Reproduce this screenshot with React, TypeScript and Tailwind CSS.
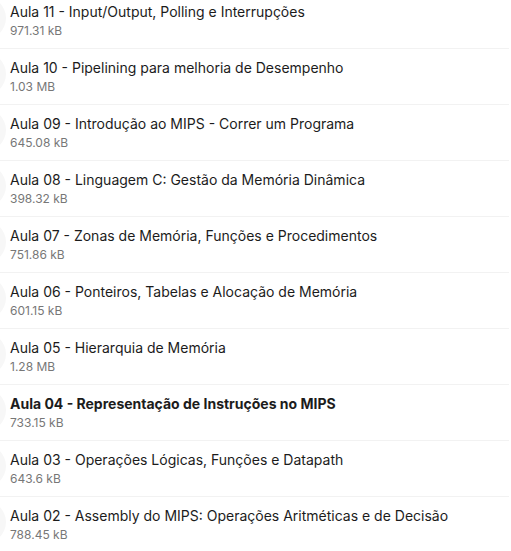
import React from "react";

const aulas = [
  { t: "Aula 11 - Input/Output, Polling e Interrupções", s: "971.31 kB" },
  { t: "Aula 10 - Pipelining para melhoria de Desempenho", s: "1.03 MB" },
  { t: "Aula 09 - Introdução ao MIPS - Correr um Programa", s: "645.08 kB" },
  { t: "Aula 08 - Linguagem C: Gestão da Memória Dinâmica", s: "398.32 kB" },
  { t: "Aula 07 - Zonas de Memória, Funções e Procedimentos", s: "751.86 kB" },
  { t: "Aula 06 - Ponteiros, Tabelas e Alocação de Memória", s: "601.15 kB" },
  { t: "Aula 05 - Hierarquia de Memória", s: "1.28 MB" },
  { t: "Aula 04 - Representação de Instruções no MIPS", s: "733.15 kB", bold: true },
  { t: "Aula 03 - Operações Lógicas, Funções e Datapath", s: "643.6 kB" },
  { t: "Aula 02 - Assembly do MIPS: Operações Aritméticas e de Decisão", s: "788.45 kB" },
];

function Row({ t, s, bold }: { t: string; s: string; bold?: boolean }) {
  return (
    <div className="relative h-[56px] border-b border-[#f2f2f2] pl-[10px] pt-[9px] overflow-hidden">
      <div className="absolute left-[-36px] top-[4px] w-[42px] h-[42px] rounded-full bg-[#f7f7f7]" />
      <div className={"relative text-[14px] leading-[20px] text-[#1c1c1c] " + (bold ? "font-bold" : "font-normal")}>{t}</div>
      <div className="relative text-[12px] leading-[18px] text-[#777777]">{s}</div>
    </div>
  );
}

export default function App() {
  return (
    <div className="w-[511px] h-[551px] overflow-hidden bg-white" style={{ fontFamily: "Inter, sans-serif" }}>
      <div className="mt-[-7px] mr-[2px]">
        {aulas.map((a) => (
          <Row key={a.t} {...a} />
        ))}
      </div>
    </div>
  );
}
